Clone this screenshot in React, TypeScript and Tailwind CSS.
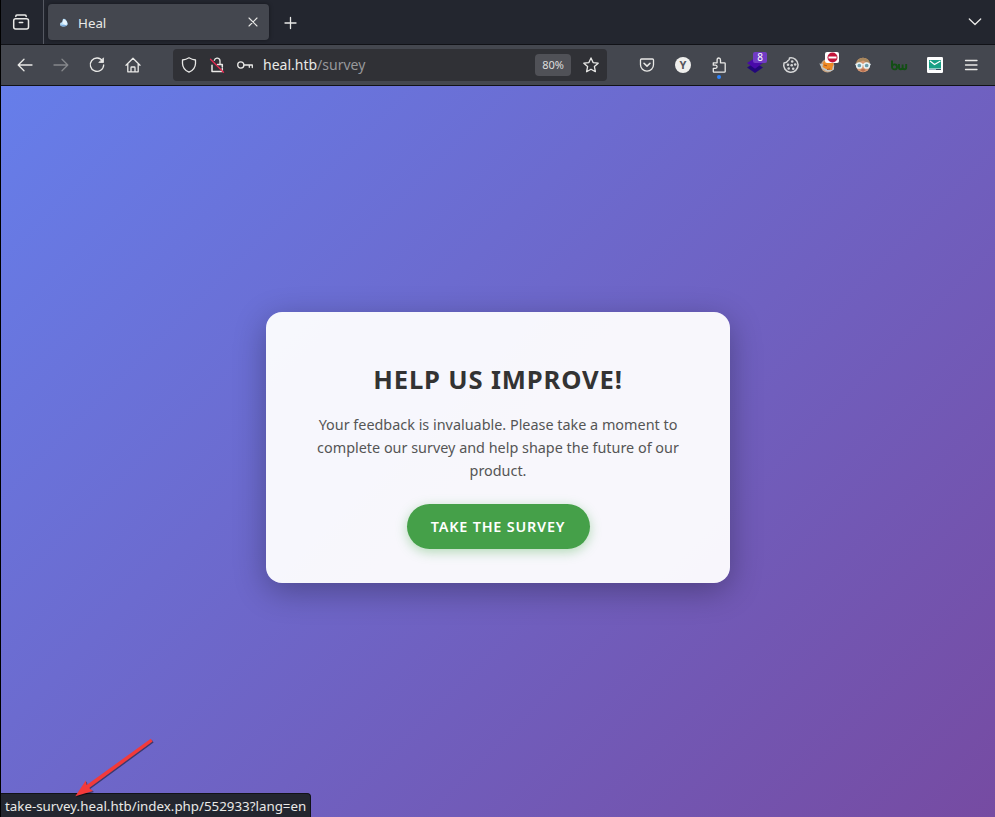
import type { ReactNode } from "react";

function Icon({ children, className = "" }: { children: ReactNode; className?: string }) {
  return (
    <svg
      width="16"
      height="16"
      viewBox="0 0 16 16"
      fill="none"
      stroke="#e9e9e7"
      strokeWidth="1.3"
      strokeLinecap="round"
      strokeLinejoin="round"
      className={"shrink-0 overflow-visible " + className}
    >
      {children}
    </svg>
  );
}

function Cell({ children }: { children: ReactNode }) {
  return <div className="relative flex h-full w-9 shrink-0 items-center justify-center">{children}</div>;
}

function TabStrip() {
  return (
    <div className="flex h-11 items-center bg-[#23262f]">
      <div className="flex h-full w-[43px] items-center border-r border-[#565962] pl-3">
        <Icon>
          <path d="M2.8 2.500V2.200Q2.800 1 4 1h8q1.200 0 1.200 1.200v.3" strokeWidth="1.500" />
          <rect x=".7" y="4.700" width="14.800" height="10.400" rx="2" strokeWidth="1.500" />
          <path d="M6.300 8.500h3.400" strokeWidth="1.500" />
        </Icon>
      </div>
      <div className="ml-1 flex h-9 w-[221px] items-center rounded bg-[#44474f] pl-2 pr-2 shadow-[0_0_4px_rgba(0,0,0,0.4)]">
        <svg width="16" height="16" viewBox="0 0 16 16" className="shrink-0">
          <path d="M7 5Q9.500 4 11 7.500q1.500 2.500 0 4-2.500 1.500-5.500.8-1.700-.6-1.500-2.300.2-1.500 2-1.800z" fill="#b9e0fa" />
          <path d="M7.500 5.500Q10.500 6 11 9q0 1.800-1.900 2.300L6.500 9z" fill="#e9f6ff" />
          <path d="M4.200 10.300q2 .9 3.800.5l2.800.4q-1 1.400-3.400 1.200-2.600-.2-3.200-2.100z" fill="#79a8d7" />
        </svg>
        <span className="ml-[6px] flex-1 pt-[2px] text-[13.33px] leading-5 text-[#e9e9e7]">Heal</span>
        <Icon>
          <path d="M4 4l8 8M12 4l-8 8" strokeWidth="1.1" />
        </Icon>
      </div>
      <Icon className="ml-[13px] mt-px">
        <path d="M8.500 2.500v11M3 8h11" />
      </Icon>
      <Icon className="ml-auto mr-3">
        <path d="M2.300 5l5.700 5.500L13.700 5" />
      </Icon>
    </div>
  );
}

function AddressBar() {
  return (
    <div className="ml-[22px] flex h-8 w-[434px] items-center rounded bg-[#303136] px-2">
      <Icon>
        <path d="M8 .8Q11 2.600 14.500 3v3.500Q14.300 12.500 8 15.200 1.700 12.500 1.500 6.500V3Q5 2.600 8 .8z" />
      </Icon>
      <Icon className="ml-3">
        <path d="M5.300 3.300a2.900 2.900 0 0 1 5.700.9v3" />
        <path d="M3 8.200v6.400h10.300v-3M8.500 7.500h4.800v2.500" strokeWidth="1.500" />
        <path d="M1.500 2.300l13 12.900" stroke="#e22850" />
      </Icon>
      <Icon className="ml-3">
        <circle cx="3.800" cy="8" r="3.100" />
        <path d="M7 8h8.300v2.500M12.300 8v2.300" />
      </Icon>
      <div className="ml-[10px] flex-1 whitespace-nowrap pb-px text-[14px] leading-5 text-[#97989b]">
        <span className="text-[#e9e9e7]">heal.htb</span>/survey
      </div>
      <div className="flex h-[22px] w-9 items-center justify-center rounded-sm bg-[#505157] text-[11px] text-[#dededc]">80%</div>
      <Icon className="ml-3">
        <path d="M8 .9l2.100 4.700 5.100.6-3.800 3.400 1 5.100L8 12.200l-4.400 2.500 1-5.100L.8 6.200l5.100-.6z" />
      </Icon>
    </div>
  );
}

function Extensions() {
  return (
    <div className="ml-[22px] flex h-full items-center">
      <Cell>
        <Icon>
          <path d="M2.500 2h11q1 0 1 1v4.700a6.500 6.500 0 0 1-13 0V3q0-1 1-1z" />
          <path d="M5 6.200l3 2.900 3-2.900" strokeWidth="1.500" />
        </Icon>
      </Cell>
      <Cell>
        <div className="flex size-4 items-center justify-center rounded-full bg-[#efefed] text-[11px] leading-4 font-bold text-[#54565c]">Y</div>
      </Cell>
      <Cell>
        <Icon>
          <path d="M2.300 5.800h3.800V2.900q0-1.900 1.700-1.900t1.700 1.900v2.900h3.900q.8 0 .8.800v7.800q0 .8-.8.800H3.100q-.8 0-.8-.8v-3h2.200q1.600-.2 1.600-1.600T4.500 8.200H2.300z" />
        </Icon>
        <span className="absolute bottom-[6px] left-4 size-1 rounded-full bg-[#2b83ff]" />
      </Cell>
      <Cell>
        <svg width="16" height="16" viewBox="0 0 16 16">
          <path d="M0 10.500L4 8l4 2 4-2 4 2.500L8 16z" fill="#23077b" />
          <path d="M0 6l8-5 8 5-8 5.800z" fill="#490aa9" />
        </svg>
        <span className="absolute left-4 top-[7px] h-[11px] w-[14px] rounded-[2px] bg-[#713bc4] text-center text-[10px] leading-[11px] text-white">8</span>
      </Cell>
      <Cell>
        <Icon>
          <path d="M6.500 1Q6.500 3.300 4.800 3.800 3.800 5.500 1 6A7.200 7.200 0 1 0 6.500 1z" stroke="#d6d7d8" strokeWidth="1.500" />
          <g fill="#d6d7d8" stroke="none">
            <circle cx="9.200" cy="4.500" r="1.300" />
            <circle cx="5" cy="7.800" r="1.300" />
            <circle cx="8.700" cy="8.300" r="1.300" />
            <circle cx="12.200" cy="7.500" r="1.300" />
            <circle cx="5.700" cy="11.500" r="1.300" />
            <circle cx="10.200" cy="11.800" r="1.300" />
          </g>
        </Icon>
      </Cell>
      <Cell>
        <svg width="16" height="16" viewBox="0 0 16 16">
          <circle cx="8.500" cy="8.800" r="6.800" fill="#c9a27e" />
          <path d="M.3 6.500l3.200.5L6 8.500l6 1 3-1v4q-4 3-8 1.500L3 11.500z" fill="#bfc6c8" />
          <path d="M4.500 5q3-3 6-1.500l4 3-1.500 6.500q-5 .5-9.500-3z" fill="#ee8a26" />
          <path d="M5 8l3 .8M8 12.500l3-.5" stroke="#a35a26" strokeWidth="1" />
        </svg>
        <span className="absolute left-4 top-[7px] flex h-[11px] w-[14px] items-center justify-center rounded-[2px] bg-white">
          <svg width="11" height="11" viewBox="0 0 11 11">
            <circle cx="5.500" cy="5.500" r="5" fill="#c2143a" />
            <path d="M1.500 4.500h8v2h-8z" fill="#fff" />
          </svg>
        </span>
      </Cell>
      <Cell>
        <svg width="16" height="16" viewBox="0 0 16 16">
          <ellipse cx="8" cy="8" rx="7" ry="7.300" fill="#d99a73" />
          <path d="M1 7Q2 .8 8 .8T15 7L11 5 8 3.500 5 5z" fill="#a8875d" />
          <path d="M5 13L8 11.500l3 1.500-3 2z" fill="#b86f50" />
          <path d="M.3 7.500h15.400" stroke="#e4eef0" strokeWidth="1.500" />
          <circle cx="4.300" cy="8.500" r="2.600" fill="#6b9ba8" stroke="#e7f2f5" strokeWidth="1.500" />
          <circle cx="11.700" cy="8.500" r="2.600" fill="#6b9ba8" stroke="#e7f2f5" strokeWidth="1.500" />
        </svg>
      </Cell>
      <Cell>
        <svg width="16" height="16" viewBox="0 0 16 16" fill="none" stroke="#124f14" strokeWidth="1.900" className="overflow-visible">
          <path d="M1 3.500v6.500" />
          <circle cx="3.500" cy="9.900" r="2.500" />
          <path d="M8 7v3.500q0 1.700 1.800 1.700t1.800-1.700V7.500v3q0 1.700 1.800 1.700t1.800-1.700V7" />
        </svg>
      </Cell>
      <Cell>
        <svg width="16" height="16" viewBox="0 0 16 16">
          <rect width="16" height="16" rx="1.200" fill="#fff" />
          <rect x="2" y="3" width="12" height="8.500" fill="#17a085" />
          <path d="M3 4l4.500 3.500L13.500 4" stroke="#fff" strokeWidth="1.200" fill="none" />
          <path d="M2 12.500h7" stroke="#9ab5c7" strokeWidth="1" />
          <path d="M9 12.500h5" stroke="#344f61" strokeWidth="1" />
        </svg>
      </Cell>
      <Cell>
        <Icon>
          <path d="M2.500 3.500h11.500M2.500 8h11.500M2.500 12.500h11.500" />
        </Icon>
      </Cell>
    </div>
  );
}

function Toolbar() {
  return (
    <div className="flex h-[42px] items-center border-y border-[#111217] bg-[#44474f] pl-[6px]">
      <Cell>
        <Icon>
          <path d="M15 8H1.300M7 2.200L1.200 8 7 13.800" />
        </Icon>
      </Cell>
      <Cell>
        <Icon className="opacity-40">
          <path d="M1 8h13.700M9 2.200L14.800 8 9 13.800" />
        </Icon>
      </Cell>
      <Cell>
        <Icon>
          <path d="M13.600 4A6.700 6.700 0 1 0 14.700 8" />
          <path d="M14.500 1.200v4.300h-4.300z" fill="#e9e9e7" strokeWidth=".8" />
        </Icon>
      </Cell>
      <Cell>
        <Icon className="mr-px">
          <path d="M1 8.200L8 1.300l7 6.900M2.800 6.500v8.300h10.400V6.500M6 14.700v-4q0-.7.700-.7h2.600q.7 0 .7.700v4" />
        </Icon>
      </Cell>
      <AddressBar />
      <Extensions />
    </div>
  );
}

export default function App() {
  return (
    <div className="flex h-[817px] w-[995px] flex-col overflow-hidden border-l border-black font-['Noto_Sans',sans-serif]">
      <TabStrip />
      <Toolbar />
      <main className="relative flex flex-1 flex-col items-center bg-[linear-gradient(135deg,#667eea_0%,#764ba2_100%)] pt-[226px]">
        <section className="flex h-[271px] w-[464px] flex-col items-center rounded-2xl bg-white/95 px-8 pt-[50px] text-center shadow-[0_8px_32px_rgba(0,0,0,0.3)]">
          <h1 className="text-[25.6px] leading-[35px] font-bold tracking-[0.85px] text-[#333]">HELP US IMPROVE!</h1>
          <p className="mt-4 text-[14.4px] leading-[23px] text-[#555]">
            Your feedback is invaluable. Please take a moment to
            <br />
            complete our survey and help shape the future of our
            <br />
            product.
          </p>
          <button className="mt-[22px] h-[45px] w-[183px] shrink-0 rounded-full bg-[#45a049] text-[14.4px] font-semibold tracking-[0.8px] whitespace-nowrap text-white shadow-[0_3px_12px_rgba(76,175,80,0.4)]">
            TAKE THE SURVEY
          </button>
        </section>
        <div className="absolute bottom-0 left-0 h-6 w-[310px] rounded-tr border-t border-r border-[#111217] bg-[#23262f] pl-1 text-[13.33px] leading-[25px] whitespace-nowrap text-[#e9e9e7]">
          take-survey.heal.htb/index.php/552933?lang=en
        </div>
        <svg width="84" height="62" viewBox="0 0 84 62" className="absolute bottom-[18px] left-[72px] drop-shadow-[1px_1px_0.5px_rgba(0,0,0,0.45)]">
          <path d="M77.800 1.800l1.800 2.800L16.200 50.900l3.800 3L2.300 59.300l10.500-15.800.9 4.400z" fill="#f33a3a" />
        </svg>
      </main>
    </div>
  );
}
